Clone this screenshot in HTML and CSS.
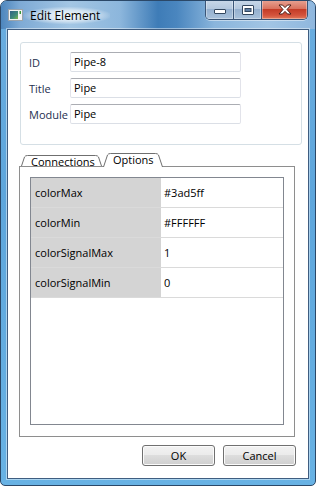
FILE: index.html
```html
<!DOCTYPE html>
<html>
<head>
<meta charset="utf-8">
<link rel="stylesheet" href="styles.css">
</head>
<body>
<div class="window">
  <div class="titlebar">
    <svg class="app-icon" width="16" height="12" viewBox="0 0 16 12">
      <defs>
        <linearGradient id="ig" x1="0" y1="0" x2="1" y2="1">
          <stop offset="0" stop-color="#2f5f86"/>
          <stop offset="0.6" stop-color="#3f8a7a"/>
          <stop offset="1" stop-color="#7fb84a"/>
        </linearGradient>
      </defs>
      <rect x="0.5" y="0.5" width="14" height="11" fill="#f2f3f4" stroke="#9aa3ab"/>
      <rect x="2" y="2" width="8" height="8" fill="url(#ig)"/>
      <rect x="11.5" y="2" width="1.5" height="3" fill="#3a9a3a"/>
    </svg>
    <span class="title">Edit Element</span>
    <div class="caption-buttons">
      <div class="cb cb-min">
        <svg width="12" height="6" viewBox="0 0 12 6"><rect x="0.5" y="0.5" width="11" height="4" rx="0.5" fill="#fff" stroke="#33475f"/></svg>
      </div>
      <div class="cb cb-max">
        <svg width="12" height="10" viewBox="0 0 12 10"><rect x="0.5" y="0.5" width="11" height="9" rx="0.5" fill="#fff" stroke="#33475f"/><rect x="3" y="3.5" width="6" height="3" fill="#5f7fa5" stroke="#33475f"/></svg>
      </div>
      <div class="cb cb-close">
        <svg width="14" height="11" viewBox="0 0 14 11"><path d="M1 1 L4.5 1 L7 3.6 L9.5 1 L13 1 L9 5.5 L13 10 L9.5 10 L7 7.4 L4.5 10 L1 10 L5 5.5 Z" fill="#fff" stroke="#4a1d16" stroke-width="1" stroke-linejoin="round"/></svg>
      </div>
    </div>
  </div>
  <div class="client">
    <div class="groupbox">
      <div class="field"><span class="label">ID</span><div class="input">Pipe-8</div></div>
      <div class="field"><span class="label">Title</span><div class="input">Pipe</div></div>
      <div class="field"><span class="label">Module</span><div class="input">Pipe</div></div>
    </div>
    <div class="tabwidget">
      <div class="tabbar">
        <div class="tab tab-conn">
          <svg class="tab-shape" width="81" height="14" viewBox="0 0 81 14"><path d="M0.5 14 L3.5 5 Q4.3 3.5 6.5 3.5 L74.5 3.5 Q76.7 3.5 77.5 5 L80.5 14" fill="#fff" stroke="#6f6f6f"/></svg>
          <span class="tab-text">Connections</span>
        </div>
        <div class="tab tab-opt selected">
          <svg class="tab-shape" width="60" height="15" viewBox="0 0 60 15"><path d="M0.5 15 L4.5 3 Q5.3 1.5 7.5 1.5 L52.5 1.5 Q54.7 1.5 55.5 3 L59.5 15" fill="#fff" stroke="#6f6f6f"/></svg>
          <span class="tab-text">Options</span>
        </div>
      </div>
      <div class="pane">
        <div class="proptable">
          <div class="row"><span class="key">colorMax</span><span class="val">#3ad5ff</span></div>
          <div class="row"><span class="key">colorMin</span><span class="val">#FFFFFF</span></div>
          <div class="row"><span class="key">colorSignalMax</span><span class="val">1</span></div>
          <div class="row"><span class="key">colorSignalMin</span><span class="val">0</span></div>
        </div>
      </div>
    </div>
    <div class="buttons">
      <button class="btn">OK</button>
      <button class="btn">Cancel</button>
    </div>
  </div>
</div>
</body>
</html>
```

FILE: styles.css
```css
html, body {
  margin: 0;
  padding: 0;
}
body {
  width: 316px;
  height: 486px;
  overflow: hidden;
  background: #ffffff;
  font-family: "Open Sans", "Noto Sans", sans-serif;
  font-size: 11px;
  color: #000;
}
.window {
  box-sizing: border-box;
  width: 316px;
  height: 486px;
  border: 1px solid #2b4868;
  border-radius: 7px 7px 5px 5px;
  background: linear-gradient(to bottom, #6aaddf 0%, #5ea6dc 40%, #68b2e4 100%);
  display: flex;
  flex-direction: column;
  overflow: hidden;
}
.titlebar {
  height: 28px;
  flex: none;
  display: flex;
  align-items: flex-start;
  background: linear-gradient(to right, #4d86bd 0%, #7eaad5 6%, #a3c6e4 22%, #8cb6dc 38%, #3e7cb7 50%, #4a86bf 56%, #8ab5dc 68%, #a2c5e4 85%, #8fb7de 100%);
}
.app-icon {
  margin: 8px 0 0 7px;
  flex: none;
}
.title {
  margin: 6px 0 0 0;
  padding: 0 10px 0 6px;
  line-height: 17px;
  font-family: "Open Sans", sans-serif;
  font-size: 12px;
  color: #000;
  background: radial-gradient(ellipse at center, rgba(255,255,255,0.85) 0%, rgba(255,255,255,0.55) 45%, rgba(255,255,255,0) 75%);
}
.caption-buttons {
  margin: -1px 7px 0 auto;
  display: flex;
  height: 20px;
  box-sizing: border-box;
  border: 1px solid #3a5577;
  border-top: none;
  border-radius: 0 0 5px 5px;
  overflow: hidden;
  box-shadow: 0 1px 0 rgba(255,255,255,0.45);
}
.cb {
  display: flex;
  align-items: center;
  justify-content: center;
  height: 100%;
  box-sizing: border-box;
  box-shadow: inset 0 0 0 1px rgba(255,255,255,0.35);
}
.cb-min {
  width: 28px;
  background: linear-gradient(to bottom, #c9d8e9 0%, #b4c8de 45%, #95b0cf 50%, #a9c2dc 100%);
  border-right: 1px solid #3a5577;
}
.cb-min svg {
  margin-top: 5px;
}
.cb-max {
  width: 28px;
  background: linear-gradient(to bottom, #c9d8e9 0%, #b4c8de 45%, #95b0cf 50%, #a9c2dc 100%);
  border-right: 1px solid #3a5577;
}
.cb-close {
  width: 45px;
  background: linear-gradient(to bottom, #e8a595 0%, #d9735f 45%, #c43c27 50%, #d4533c 80%, #e07a5c 100%);
}
.client {
  flex: 1;
  margin: 0 6px 6px 6px;
  border: 1px solid #3f5d80;
  background: #ffffff;
  box-shadow: 0 0 0 1px rgba(255,255,255,0.45);
  display: flex;
  flex-direction: column;
}
.groupbox {
  box-sizing: border-box;
  margin: 12px 0 0 12px;
  width: 282px;
  height: 103px;
  border: 1px solid #d5dfe5;
  border-radius: 3px;
  padding: 9px 0 0 8px;
  display: flex;
  flex-direction: column;
  gap: 6px;
}
.field {
  display: flex;
  align-items: center;
  height: 20px;
}
.label {
  width: 41px;
  color: #1e2f4f;
  font-size: 11px;
}
.input {
  box-sizing: border-box;
  width: 171px;
  height: 20px;
  border: 1px solid #dbdfe6;
  border-top-color: #abadb3;
  border-left-color: #e2e3ea;
  border-right-color: #e2e3ea;
  border-radius: 2px;
  padding: 0 3px;
  line-height: 18px;
  font-size: 11px;
}
.tabwidget {
  margin: 7px 0 0 11px;
  width: 276px;
}
.tabbar {
  height: 14px;
  display: flex;
  padding-left: 2px;
  gap: 1px;
}
.tab {
  position: relative;
  height: 14px;
}
.tab-conn {
  width: 81px;
}
.tab-opt {
  width: 60px;
  z-index: 1;
}
.tab-shape {
  position: absolute;
  left: 0;
  top: 0;
  overflow: visible;
}
.tab-text {
  position: relative;
  display: block;
  line-height: 12px;
  font-size: 11px;
}
.tab-conn .tab-text {
  padding: 4px 0 0 10px;
}
.tab-opt .tab-text {
  padding: 2px 0 0 10px;
}
.pane {
  box-sizing: border-box;
  height: 271px;
  border: 1px solid #8e8e8e;
  padding: 10px 10px 11px 10px;
}
.proptable {
  box-sizing: border-box;
  height: 248px;
  border: 1px solid #828790;
  background: #fff;
}
.row {
  box-sizing: border-box;
  height: 30px;
  display: grid;
  grid-template-columns: 130px 1fr;
  border-bottom: 1px solid #dadada;
}
.key {
  background: #d4d4d4;
  padding-left: 4px;
  line-height: 29px;
}
.val {
  padding-left: 3px;
  line-height: 29px;
}
.buttons {
  margin: 8px 12px 0 0;
  display: flex;
  justify-content: flex-end;
  gap: 8px;
}
.btn {
  box-sizing: border-box;
  width: 73px;
  height: 21px;
  margin: 0;
  padding: 0;
  border: 1px solid #707070;
  border-radius: 3px;
  background: linear-gradient(to bottom, #f2f2f2 0%, #ebebeb 48%, #dddddd 50%, #cfcfcf 100%);
  box-shadow: inset 0 0 0 1px #fbfbfb;
  font-family: "Open Sans", sans-serif;
  font-size: 11px;
  color: #000;
  line-height: 19px;
}
```
